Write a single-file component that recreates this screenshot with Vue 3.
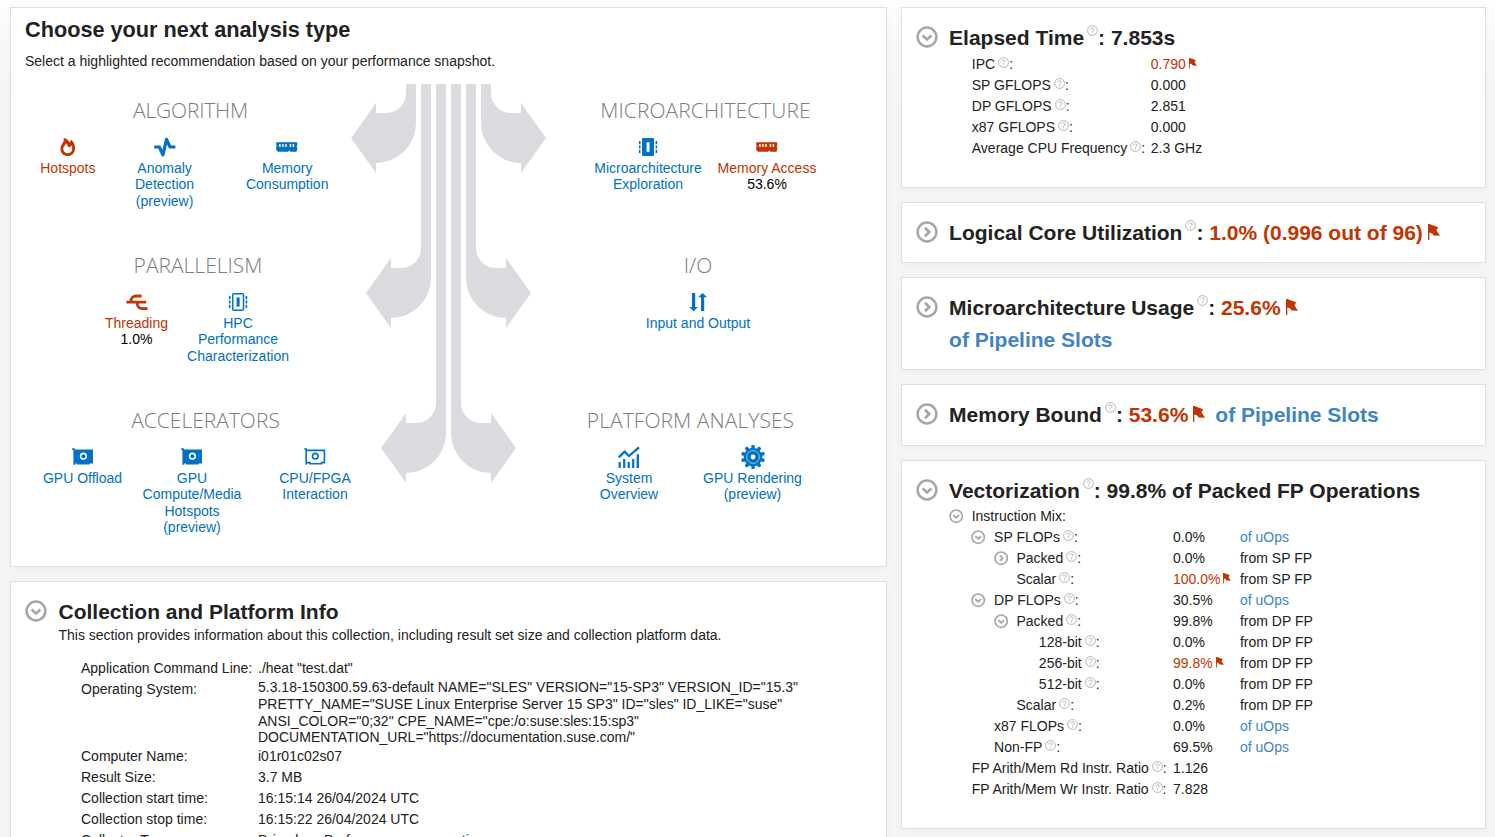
<script setup>
import { h } from 'vue'

const blue = 'blue'
const red = 'red'

const sections = [
  { key: 'algorithm', title: 'ALGORITHM', side: 'left', items: [
    { icon: 'flame', lines: ['Hotspots'], tone: red, width: 76 },
    { icon: 'pulse', lines: ['Anomaly', 'Detection', '(preview)'], tone: blue, width: 118 },
    { icon: 'memory', lines: ['Memory', 'Consumption'], tone: blue, width: 128 },
  ] },
  { key: 'micro', title: 'MICROARCHITECTURE', side: 'right', items: [
    { icon: 'chip', lines: ['Microarchitecture', 'Exploration'], tone: blue, width: 123 },
    { icon: 'memory', lines: ['Memory Access'], note: '53.6%', tone: red, width: 115 },
  ] },
  { key: 'parallelism', title: 'PARALLELISM', side: 'left', items: [
    { icon: 'threads', lines: ['Threading'], note: '1.0%', tone: red, width: 80 },
    { icon: 'chipOutline', lines: ['HPC', 'Performance', 'Characterization'], tone: blue, width: 123 },
  ] },
  { key: 'io', title: 'I/O', side: 'right', items: [
    { icon: 'updown', lines: ['Input and Output'], tone: blue, width: 130 },
  ] },
  { key: 'accelerators', title: 'ACCELERATORS', side: 'left', items: [
    { icon: 'gpu', lines: ['GPU Offload'], tone: blue, width: 105 },
    { icon: 'gpu', lines: ['GPU', 'Compute/Media', 'Hotspots', '(preview)'], tone: blue, width: 114 },
    { icon: 'gpuOutline', lines: ['CPU/FPGA', 'Interaction'], tone: blue, width: 132 },
  ] },
  { key: 'platform', title: 'PLATFORM ANALYSES', side: 'right', items: [
    { icon: 'chart', lines: ['System', 'Overview'], tone: blue, width: 124 },
    { icon: 'gear', lines: ['GPU Rendering', '(preview)'], tone: blue, width: 123 },
  ] },
]

const arrow = 'M55 0H65V39A40 40 0 0 1 25 79V89L0 54 25 19V29H35A20 20 0 0 0 55 9Z'
const arrowMid = 'M70 0H80V194A40 40 0 0 1 40 234V244L15 209 40 174V184H50A20 20 0 0 0 70 164Z'
const arrowLow = 'M85 0H95V349A40 40 0 0 1 55 389V399L30 364 55 329V339H65A20 20 0 0 0 85 319Z'

const metrics = [
  { name: 'IPC', value: '0.790', flag: true },
  { name: 'SP GFLOPS', value: '0.000' },
  { name: 'DP GFLOPS', value: '2.851' },
  { name: 'x87 GFLOPS', value: '0.000' },
  { name: 'Average CPU Frequency', value: '2.3 GHz' },
]

const mix = [
  { name: 'Instruction Mix', level: 0, toggle: 'down', noHelp: true },
  { name: 'SP FLOPs', level: 1, toggle: 'down', value: '0.0%', unit: 'of uOps', link: true },
  { name: 'Packed', level: 2, toggle: 'right', value: '0.0%', unit: 'from SP FP' },
  { name: 'Scalar', level: 2, value: '100.0%', flag: true, unit: 'from SP FP' },
  { name: 'DP FLOPs', level: 1, toggle: 'down', value: '30.5%', unit: 'of uOps', link: true },
  { name: 'Packed', level: 2, toggle: 'down', value: '99.8%', unit: 'from DP FP' },
  { name: '128-bit', level: 3, value: '0.0%', unit: 'from DP FP' },
  { name: '256-bit', level: 3, value: '99.8%', flag: true, unit: 'from DP FP' },
  { name: '512-bit', level: 3, value: '0.0%', unit: 'from DP FP' },
  { name: 'Scalar', level: 2, value: '0.2%', unit: 'from DP FP' },
  { name: 'x87 FLOPs', level: 1, value: '0.0%', unit: 'of uOps', link: true },
  { name: 'Non-FP', level: 1, value: '69.5%', unit: 'of uOps', link: true },
  { name: 'FP Arith/Mem Rd Instr. Ratio', level: 0, value: '1.126' },
  { name: 'FP Arith/Mem Wr Instr. Ratio', level: 0, value: '7.828' },
]

const info = [
  { name: 'Application Command Line:', lines: ['./heat "test.dat"'] },
  { name: 'Operating System:', lines: [
    '5.3.18-150300.59.63-default NAME="SLES" VERSION="15-SP3" VERSION_ID="15.3"',
    'PRETTY_NAME="SUSE Linux Enterprise Server 15 SP3" ID="sles" ID_LIKE="suse"',
    'ANSI_COLOR="0;32" CPE_NAME="cpe:/o:suse:sles:15:sp3"',
    'DOCUMENTATION_URL="https://documentation.suse.com/"',
  ] },
  { name: 'Computer Name:', lines: ['i01r01c02s07'] },
  { name: 'Result Size:', lines: ['3.7 MB'] },
  { name: 'Collection start time:', lines: ['16:15:14 26/04/2024 UTC'] },
  { name: 'Collection stop time:', lines: ['16:15:22 26/04/2024 UTC'] },
  { name: 'Collector Type:', lines: ['Driverless Perf per-process counting'] },
]

// Ten teeth around the gear hub
const teeth = Array.from({ length: 10 }, (_, i) => i * 36)

const Toggle = (props) => h('svg', { viewBox: '0 0 22 22', width: props.size, height: props.size }, [
  h('circle', { cx: 11, cy: 11, r: 9.4, fill: 'none', stroke: '#a6a6a6', 'stroke-width': 2.5 }),
  h('path', {
    d: props.dir === 'right' ? 'M9 6.8L13.2 11 9 15.2' : 'M6.6 9.4L11 13.4 15.4 9.4',
    fill: 'none', stroke: '#a6a6a6', 'stroke-width': 2.7,
  }),
])
Toggle.props = ['size', 'dir']

const Help = () => h('svg', { viewBox: '0 0 11 11', width: 11, height: 11 }, [
  h('circle', { cx: 5.5, cy: 5.5, r: 4.9, fill: 'none', stroke: '#acacac', 'stroke-width': 0.9 }),
  h('path', { d: 'M3.9 4.4C3.9 2.3 7.1 2.3 7.1 4.3 7.1 5.4 5.5 5.4 5.5 6.7M5.5 7.5V8.5', fill: 'none', stroke: '#acacac', 'stroke-width': 0.95 }),
])

const Flag = (props) => h('svg', { viewBox: '0 0 12 16', width: props.size * 0.75, height: props.size }, [
  h('path', { d: 'M0 0H1.2L10.2 3.2 8.4 6.3 12 11.8 5.6 11.4 4.2 9.4 1.3 8.4V16H0Z', fill: '#c23500' }),
])
Flag.props = ['size']
</script>

<template>
  <div class="page">
    <div class="column left">
      <section class="card chooser">
        <h1>Choose your next analysis type</h1>
        <p class="lead">Select a highlighted recommendation based on your performance snapshot.</p>
        <div class="diagram">
          <svg class="arrows" viewBox="0 0 195 399" width="195" height="399">
            <g fill="#dadbdf">
              <path :d="arrow" /><path :d="arrowMid" /><path :d="arrowLow" />
              <g transform="translate(195 0) scale(-1 1)">
                <path :d="arrow" /><path :d="arrowMid" /><path :d="arrowLow" />
              </g>
            </g>
          </svg>
          <div v-for="s in sections" :key="s.key" class="group" :class="[s.side, s.key]">
            <h2>{{ s.title }}</h2>
            <div class="items">
              <div v-for="(item, i) in s.items" :key="i" class="item" :class="item.tone" :style="{ width: item.width + 'px' }">
                <svg class="glyph" viewBox="0 0 24 24" width="24" height="24" fill="currentColor">
                  <template v-if="item.icon === 'flame'">
                    <path fill-rule="evenodd" d="M7.6 3C10.4 3.4 12.7 5 13.4 7.6L15.3 4.8C18 7.4 19.2 10.2 19 13.7 18.8 18 15.8 21 11.7 21 7.5 21 4.4 18.2 4.4 14 4.4 11 5.8 9.3 7 7.6 7.8 6.2 7.9 4.8 7.6 3ZM10 8C9.7 10.4 7.3 11 7.3 14 7.3 16.6 9.2 18.3 11.8 18.3 14.4 18.3 16.2 16.6 16.2 14 16.2 12.6 15.9 11.5 15.5 10.3L13.4 12.8C12 12 11.3 10 10 8Z" />
                  </template>
                  <path v-else-if="item.icon === 'pulse'" d="M1.2 12H6.4L9.9 19.8 13.5 4.4 17 12H22.4" fill="none" stroke="currentColor" stroke-width="3.2" stroke-linejoin="round" />
                  <path v-else-if="item.icon === 'memory'" fill-rule="evenodd" d="M1.2 7.2H22.2V10.4L21.4 11.2 22.2 12V15L21.2 16.8H15.2L14.2 15.2 13.2 16.8H3L1.2 15V12L2 11.2 1.2 10.4ZM4.2 8.9V12H5.6V8.9ZM7.2 8.9V12H8.6V8.9ZM10.2 8.9V12H11.6V8.9ZM14.7 8.9V12H16.1V8.9ZM17.7 8.9V12H19.1V8.9Z" />
                  <g v-else-if="item.icon === 'chip' || item.icon === 'chipOutline'">
                    <path v-if="item.icon === 'chip'" fill-rule="evenodd" d="M7.2 3H16.8Q18 3 18 4.3V19.7Q18 21 16.8 21H7.2Q6 21 6 19.7V4.3Q6 3 7.2 3ZM10.6 7.2V16.8H13.5V7.2Z" />
                    <g v-else>
                      <rect x="6.7" y="3.7" width="10.8" height="16.6" rx="1" fill="none" stroke="currentColor" stroke-width="1.5" />
                      <rect x="10.6" y="7.4" width="3" height="9.2" />
                    </g>
                    <path d="M3.7 6V18M20.4 6V18" fill="none" stroke="currentColor" stroke-width="1.6" stroke-dasharray="3.2 1.2" />
                  </g>
                  <path v-else-if="item.icon === 'threads'" d="M1.4 12.2H21.2M5.8 12.2C6 7.6 7.6 6 11.6 6H16.6M12 12.2C12.4 17 13.8 18.6 17.2 18.6H22.6" fill="none" stroke="currentColor" stroke-width="2.8" />
                  <g v-else-if="item.icon === 'updown'">
                    <path d="M6 3H9.2V17H12L7.6 21.2 3.2 17H6ZM15 21H18.2V7.2H21L16.6 3 12.2 7.2H15Z" />
                  </g>
                  <g v-else-if="item.icon === 'gpu'">
                    <path fill-rule="evenodd" d="M1.2 3.2H3.8V4.6H22V18.6H18.6V19.6H6V18.6H4.4V19.8H2.4V4.9H1.2ZM12.4 7.6A3.6 3.6 0 1 0 12.4 14.8 3.6 3.6 0 1 0 12.4 7.6Z" />
                    <circle cx="12.4" cy="11.2" r="2" />
                  </g>
                  <g v-else-if="item.icon === 'gpuOutline'" fill="none" stroke="currentColor" stroke-width="1.6">
                    <path d="M1.2 4H3.2V19.8M3.4 5.4H21.4V17.6H18.4V18.8H7V17.6H3.4" />
                    <circle cx="12.3" cy="11.2" r="2.8" />
                  </g>
                  <g v-else-if="item.icon === 'chart'">
                    <path d="M1.8 12.4L7.6 6.6 12 11 22 2.4" fill="none" stroke="currentColor" stroke-width="2.3" />
                    <path d="M1.6 17H3.8V23H1.6ZM6.1 14H8.3V23H6.1ZM10.6 17H12.8V23H10.6ZM15.1 14H17.3V23H15.1ZM19.6 9.3H22V23H19.6Z" />
                  </g>
                  <g v-else>
                    <rect v-for="a in teeth" :key="a" x="10.3" y="0" width="3.4" height="5" rx="0.8" :transform="`rotate(${a} 12 12)`" />
                    <circle cx="12" cy="12" r="9.3" />
                    <circle cx="12" cy="12" r="6.4" fill="none" stroke="#fff" stroke-opacity="0.8" stroke-width="0.7" />
                    <circle cx="12" cy="12" r="2.4" fill="#fff" />
                  </g>
                </svg>
                <span v-for="line in item.lines" :key="line">{{ line }}</span>
                <span v-if="item.note" class="note">{{ item.note }}</span>
              </div>
            </div>
          </div>
        </div>
      </section>

      <section class="card platform-info">
        <div class="head">
          <Toggle :size="22" dir="down" />
          <h3>Collection and Platform Info</h3>
        </div>
        <p class="description">This section provides information about this collection, including result set size and collection platform data.</p>
        <dl class="info">
          <template v-for="row in info" :key="row.name">
            <dt>{{ row.name }}</dt>
            <dd :class="{ multi: row.lines.length > 1 }"><div v-for="line in row.lines" :key="line">{{ line }}</div></dd>
          </template>
        </dl>
      </section>
    </div>

    <div class="column right">
      <section class="card elapsed">
        <div class="head">
          <Toggle :size="22" dir="down" />
          <h3>Elapsed Time<Help class="sup" />: 7.853s</h3>
        </div>
        <div class="metrics">
          <template v-for="m in metrics" :key="m.name">
            <span class="name">{{ m.name }}<Help class="hint" />:</span>
            <span :class="{ bad: m.flag }">{{ m.value }}<Flag v-if="m.flag" class="flag-small" :size="10.6" /></span>
          </template>
        </div>
      </section>

      <section class="card logical">
        <div class="head">
          <Toggle :size="22" dir="right" />
          <h3>Logical Core Utilization<Help class="sup" />: <span class="bad">1.0% (0.996 out of 96)<Flag class="flag" :size="16" /></span></h3>
        </div>
      </section>

      <section class="card usage">
        <div class="head">
          <Toggle :size="22" dir="right" />
          <h3>Microarchitecture Usage<Help class="sup" />: <span class="bad">25.6%<Flag class="flag" :size="16" /></span><br><span class="link">of Pipeline Slots</span></h3>
        </div>
      </section>

      <section class="card memory">
        <div class="head">
          <Toggle :size="22" dir="right" />
          <h3>Memory Bound<Help class="sup" />: <span class="bad">53.6%<Flag class="flag" :size="16" /></span><span class="link inline">of Pipeline Slots</span></h3>
        </div>
      </section>

      <section class="card vector">
        <div class="head">
          <Toggle :size="22" dir="down" />
          <h3>Vectorization<Help class="sup" />: 99.8% of Packed FP Operations</h3>
        </div>
        <div class="tree">
          <div v-for="(r, i) in mix" :key="i" class="tree-row">
            <span class="name" :class="'level-' + r.level">
              <span class="slot"><Toggle v-if="r.toggle" :size="14.4" :dir="r.toggle" /></span>{{ r.name }}<Help v-if="!r.noHelp" class="hint" />:</span>
            <span :class="{ bad: r.flag }">{{ r.value }}<Flag v-if="r.flag" class="flag-small" :size="10.6" /></span>
            <span :class="{ link: r.link }">{{ r.unit }}</span>
          </div>
        </div>
      </section>
    </div>
  </div>
</template>

<style>
body {
  margin: 0;
  overflow: hidden;
  background: #f5f5f5;
}
</style>

<style scoped>
.page {
  box-sizing: border-box;
  height: 837px;
  overflow: hidden;
  display: grid;
  grid-template-columns: 877px 585px;
  column-gap: 14px;
  padding: 7px 0 0 10px;
  background: linear-gradient(#fefefe 0, #f8f8f8 45px, #f5f5f5 110px);
  font: 14px/21px "Liberation Sans", Arial, sans-serif;
  color: #222;
}
.column {
  display: flex;
  flex-direction: column;
  gap: 14px;
}
.card {
  box-sizing: border-box;
  flex: none;
  background: #fff;
  border: 1px solid #dedfe1;
  box-shadow: 0 2px 9px rgba(0, 0, 0, 0.03);
  padding: 14px;
}
.right .card { padding-left: 13.6px; }
h1, h2, h3, p, dl, dd { margin: 0; }

.chooser { height: 560px; padding: 6px 0 0 14px; }
h1 { font-size: 21.7px; line-height: 32px; }
.lead { margin-top: 5px; }
.diagram {
  position: relative;
  margin: 12px 0 0 5px;
  width: 836px;
  display: grid;
  grid-template-columns: 1fr 1fr;
  grid-auto-rows: 155px;
}
.arrows { position: absolute; left: 321px; top: 0; }
.group { padding-top: 11px; }
.group.right { justify-self: end; }
.algorithm, .micro { width: 321px; }
.parallelism, .io { width: 336px; }
.accelerators, .platform { width: 351px; }
h2 {
  font: 300 21px/30px "Open Sans", "Noto Sans", sans-serif;
  color: #7c7c7c;
  text-align: center;
  white-space: nowrap;
  height: 40px;
}
.algorithm h2 { letter-spacing: -0.2px; }
.micro h2, .platform h2 { letter-spacing: 0.07px; }
.items { display: flex; justify-content: center; }
.item {
  display: flex;
  flex-direction: column;
  align-items: center;
  line-height: 16.6px;
}
.item.blue { color: #0071c5; }
.item.red { color: #c23500; }
.item .note { color: #000; }
.glyph { flex: none; margin-bottom: 0.65px; }

.platform-info { height: 400px; }
.head { display: flex; gap: 11.5px; }
.head > svg { flex: none; margin-top: 4px; }
h3 { font-size: 21px; line-height: 32px; white-space: nowrap; }
.sup { margin: 0 0 0 3px; vertical-align: 9.5px; }
.flag { margin-left: 5px; vertical-align: 0; }
.bad { color: #c23500; }
.link { color: #4183c4; }
.link.inline { margin-left: 10px; }
.description { margin: -3px 0 0 33.5px; }
.info {
  display: grid;
  grid-template-columns: 177px 1fr;
  margin: 12px 0 0 56px;
}
.multi { line-height: 16.6px; padding: 0.35px 0 0.65px; }

.elapsed { height: 181px; }
.metrics {
  display: grid;
  grid-template-columns: 179px 1fr;
  grid-auto-rows: 21px;
  margin-left: 56.2px;
}
.name { white-space: nowrap; }
.hint { margin-left: 3px; vertical-align: 1px; }
.flag-small { margin-left: 3px; vertical-align: 0; }
.logical { height: 61px; }
.usage { height: 93px; }
.memory { height: 62px; }
.vector { height: 369px; }
.tree { margin-top: -1px; }
.tree-row {
  display: grid;
  grid-template-columns: 224px 67px 1fr;
  height: 21px;
  margin-left: 33.4px;
}
.slot { display: inline-block; width: 22.7px; }
.slot svg { display: block; margin-bottom: -2.8px; }
.level-1 { padding-left: 22.4px; }
.level-2 { padding-left: 44.8px; }
.level-3 { padding-left: 67.2px; }
</style>
